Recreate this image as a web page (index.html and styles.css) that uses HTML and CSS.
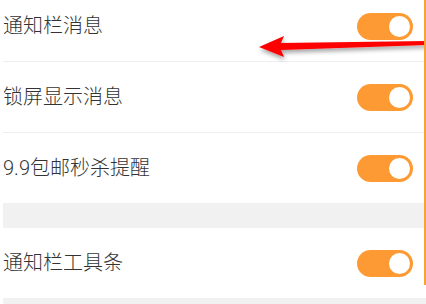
FILE: index.html
```html
<!DOCTYPE html>
<html lang="zh-CN">
<head>
    <meta charset="UTF-8">
    <meta name="viewport" content="width=device-width, initial-scale=1.0">
    <title>消息设置</title>
    <link rel="stylesheet" href="styles.css">
</head>
<body>
    <div class="settings">
        <div class="group">
            <div class="row first">
                <span class="label">通知栏消息</span>
                <div class="switch on"><div class="knob"></div></div>
            </div>
            <div class="row">
                <span class="label">锁屏显示消息</span>
                <div class="switch on"><div class="knob"></div></div>
            </div>
            <div class="row last">
                <span class="label">9.9包邮秒杀提醒</span>
                <div class="switch on"><div class="knob"></div></div>
            </div>
        </div>
        <div class="gap"></div>
        <div class="group">
            <div class="row last">
                <span class="label">通知栏工具条</span>
                <div class="switch on"><div class="knob"></div></div>
            </div>
        </div>
        <div class="gap"></div>

        <!-- 标注 -->
        <svg class="arrow" width="170" height="36" viewBox="0 0 170 36">
            <defs>
                <filter id="shadow" x="-10%" y="-50%" width="120%" height="200%">
                    <feDropShadow dx="1" dy="3" stdDeviation="2" flood-color="#000" flood-opacity="0.35"/>
                </filter>
            </defs>
            <path d="M2 17 L27 6 L24 13 L170 11 L170 15 L24 20 L27 27 Z" fill="#f00" filter="url(#shadow)"/>
        </svg>
        <div class="mark-line"></div>
    </div>
</body>
</html>
```

FILE: styles.css
```css
body {
    margin: 0;
    background-color: #fff;
    font-family: Roboto, "Noto Sans CJK SC", sans-serif;
}

.settings {
    position: relative;
    width: 426px;
    height: 304px;
    overflow: hidden;
    padding-left: 3px;
    box-sizing: border-box;
}

.group {
    background-color: #fff;
}

.row {
    display: flex;
    justify-content: space-between;
    align-items: center;
    height: 70px;
    padding-right: 13px;
    border-bottom: 1px solid #eeeeee;
}

.row.first {
    margin-top: -9px;
}

.row.last {
    border-bottom: none;
}

.label {
    font-size: 20px;
    font-weight: 300;
    color: #333;
    line-height: 1;
}

.switch {
    position: relative;
    width: 56px;
    height: 27px;
    border-radius: 14px;
    background-color: #fd9a33;
}

.knob {
    position: absolute;
    top: 1px;
    right: 1px;
    width: 21px;
    height: 21px;
    border: 2px solid #fd9a33;
    border-radius: 50%;
    background-color: #fff;
}

.gap {
    height: 25px;
    background-color: #f1f1f1;
}

.arrow {
    position: absolute;
    left: 257px;
    top: 30px;
}

.mark-line {
    position: absolute;
    top: 0;
    right: 0;
    width: 2px;
    height: 285px;
    background-color: #f7a234;
}
```
